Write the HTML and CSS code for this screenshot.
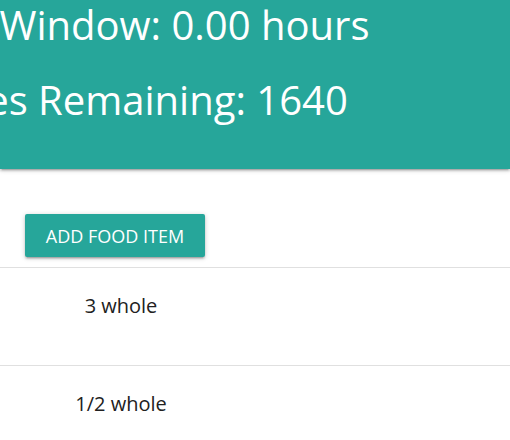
FILE: index.html
```html
<!DOCTYPE html>
<html>
<head>
<meta charset="utf-8">
<link rel="stylesheet" href="styles.css">
</head>
<body>
<header class="header">
  <div class="header-inner">
    <div class="stat">Fasting Window: 0.00 hours</div>
    <div class="stat">Calories Remaining: 1640</div>
  </div>
</header>
<main class="content">
  <div class="actions">
    <button class="btn">Add Food Item</button>
  </div>
  <table class="food-table">
    <tbody>
      <tr><td class="qty">3 whole</td><td class="rest"></td></tr>
      <tr><td class="qty">1/2 whole</td><td class="rest"></td></tr>
    </tbody>
  </table>
</main>
</body>
</html>
```
FILE: styles.css
```css
html, body {
  margin: 0;
  padding: 0;
  background: #fff;
  overflow: hidden;
  font-family: "Open Sans", "Noto Sans", sans-serif;
}
.header {
  background: #26a69a;
  height: 169px;
  box-shadow: 0 2px 2px 0 rgba(0,0,0,.14), 0 3px 1px -2px rgba(0,0,0,.12), 0 1px 5px 0 rgba(0,0,0,.2);
  position: relative;
  z-index: 1;
}
.header-inner {
  width: 226px;
  display: flex;
  flex-direction: column;
  align-items: center;
  gap: 25px;
}
.stat {
  color: #fff;
  font-size: 40px;
  line-height: 50px;
  white-space: nowrap;
}
.actions {
  padding: 45px 0 10px 25px;
}
.btn {
  display: block;
  width: 180px;
  height: 43px;
  border: none;
  border-radius: 2px;
  background: #26a69a;
  color: #fff;
  font-family: inherit;
  font-size: 18px;
  text-transform: uppercase;
  padding: 0;
  box-shadow: 0 2px 2px 0 rgba(0,0,0,.14), 0 3px 1px -2px rgba(0,0,0,.12), 0 1px 5px 0 rgba(0,0,0,.2);
}
.food-table {
  width: 100%;
  border-collapse: collapse;
  border-top: 1px solid #e0e0e0;
}
.food-table tr {
  border-bottom: 1px solid #e0e0e0;
}
.food-table td {
  height: 98px;
  padding: 0;
  vertical-align: top;
  box-sizing: border-box;
}
.qty {
  width: 242px;
  text-align: center;
  color: #212121;
  font-size: 20px;
  line-height: 30px;
  padding-top: 23px !important;
}
```
